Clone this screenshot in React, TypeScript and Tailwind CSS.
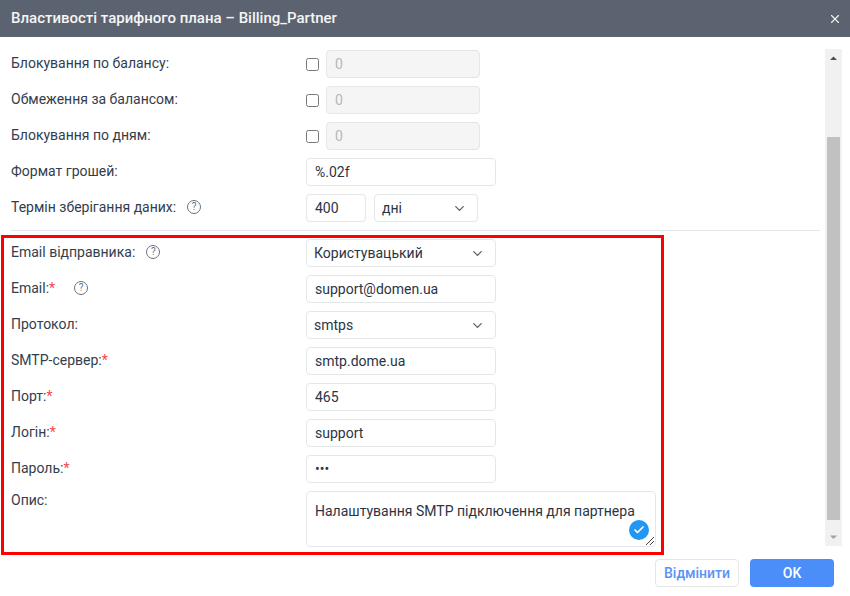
import React from 'react';
import { X, ChevronDown, Check } from 'lucide-react';

const Help: React.FC = () => (
  <span className="w-[14px] h-[14px] rounded-full border border-[#6b7280] text-[#6b7280] text-[10px] leading-[12px] text-center inline-block">?</span>
);

const Row: React.FC<{ label: string; required?: boolean; helpGap?: string; children: React.ReactNode }> = ({ label, required, helpGap, children }) => (
  <div className="flex h-[28px] mb-[8px]">
    <div className="w-[295px] flex items-center text-[#333d4d] -translate-y-px">
      <span>{label}</span>
      {required && <span className="text-[#f5474b]">*</span>}
      {helpGap && <span className={`flex ${helpGap}`}><Help /></span>}
    </div>
    {children}
  </div>
);

const Field: React.FC<{ width?: string; children: React.ReactNode }> = ({ width = 'w-[190px]', children }) => (
  <div className={`${width} h-[28px] px-[8px] flex items-center border border-[#e4e6e8] rounded-[4px] bg-white text-[#2b3445]`}>{children}</div>
);

const Select: React.FC<{ width?: string; value: string }> = ({ width = 'w-[190px]', value }) => (
  <div className={`${width} h-[28px] pl-[7px] pr-[10px] flex items-center justify-between border border-[#e4e6e8] rounded-[4px] bg-white text-[#2b3445]`}>
    <span>{value}</span>
    <ChevronDown className="w-[15px] h-[15px] text-[#5c6370]" strokeWidth={2.2} />
  </div>
);

const LockedRow: React.FC<{ label: string }> = ({ label }) => (
  <Row label={label}>
    <div className="flex items-center">
      <input type="checkbox" className="w-[13px] h-[13px] m-0 mr-[7px]" />
      <div className="w-[154px] h-[28px] px-[8px] flex items-center border border-[#e4e6e8] rounded-[4px] bg-[#f5f5f5] text-[#b4b8bd]">0</div>
    </div>
  </Row>
);

export default function App() {
  return (
    <div className="relative w-[850px] h-[596px] bg-white overflow-hidden text-[14px] font-['Roboto','Liberation_Sans',sans-serif]">
      <div className="h-[37px] bg-[#5c6370] flex items-center justify-between pl-[11px] pr-[8px] text-white">
        <span className="text-[15px] font-medium text-[#f4f5f6]">Властивості тарифного плана – Billing_Partner</span>
        <X className="w-[14px] h-[14px] text-[#f0f1f2]" strokeWidth={2} />
      </div>

      <div className="flex h-[522px]">
        <div className="w-[820px] pl-[11px] pt-[13px]">
          <LockedRow label="Блокування по балансу:" />
          <LockedRow label="Обмеження за балансом:" />
          <LockedRow label="Блокування по дням:" />
          <Row label="Формат грошей:">
            <Field>%.02f</Field>
          </Row>
          <Row label="Термін зберігання даних:" helpGap="ml-[11px]">
            <div className="flex gap-[8px]">
              <Field width="w-[60px]">400</Field>
              <Select width="w-[104px]" value="дні" />
            </div>
          </Row>
          <div className="border-t border-[#e4e6e8] mb-[8px]" />

          <Row label="Email відправника:" helpGap="ml-[11px]">
            <Select value="Користувацький" />
          </Row>
          <Row label="Email:" required helpGap="ml-[19px]">
            <Field>support@domen.ua</Field>
          </Row>
          <Row label="Протокол:">
            <Select value="smtps" />
          </Row>
          <Row label="SMTP-сервер:" required>
            <Field>smtp.dome.ua</Field>
          </Row>
          <Row label="Порт:" required>
            <Field>465</Field>
          </Row>
          <Row label="Логін:" required>
            <Field>support</Field>
          </Row>
          <Row label="Пароль:" required>
            <Field>•••</Field>
          </Row>
          <div className="flex">
            <div className="w-[295px] text-[#333d4d] pt-[1px] leading-[16px]">Опис:</div>
            <div className="relative w-[350px] h-[56px] px-[8px] pt-[9px] border border-[#e4e6e8] rounded-[4px] text-[#2b3445]">
              Налаштування SMTP підключення для партнера
              <span className="absolute right-[6px] bottom-[6px] w-[20px] h-[20px] rounded-full bg-[#2196f3] flex items-center justify-center">
                <Check className="w-[12px] h-[12px] text-white" strokeWidth={3.5} />
              </span>
              <svg className="absolute right-0 bottom-0 w-[10px] h-[10px]" viewBox="0 0 10 10">
                <path d="M9 1 1 9M9 5 5 9" stroke="#444" strokeWidth="1" fill="none" />
              </svg>
            </div>
          </div>
        </div>

        <div className="w-[17px] ml-[5px] mt-[12px] h-[497px] bg-[#f1f1f1] flex flex-col items-center">
          <svg className="w-[17px] h-[17px] shrink-0" viewBox="0 0 17 17">
            <path d="M5 11h7L8.5 7.5z" fill="#505050" />
          </svg>
          <div className="w-[13px] h-[383px] mt-[71px] bg-[#c1c1c1]" />
          <svg className="w-[17px] h-[17px] shrink-0 mt-[9px]" viewBox="0 0 17 17">
            <path d="M5 6.5h7L8.5 10z" fill="#a3a3a3" />
          </svg>
        </div>
      </div>

      <div className="flex justify-end gap-[11px] pr-[16px]">
        <button className="w-[84px] h-[28px] border border-[#e4e6e8] rounded-[4px] bg-white text-[#5b93f5] font-medium">Відмінити</button>
        <button className="w-[84px] h-[28px] rounded-[4px] bg-[#4b8efa] text-white font-medium">OK</button>
      </div>

      <div className="absolute left-[1px] top-[235px] w-[663px] h-[320px] border-[3px] border-[#fe0000] pointer-events-none" />
    </div>
  );
}
